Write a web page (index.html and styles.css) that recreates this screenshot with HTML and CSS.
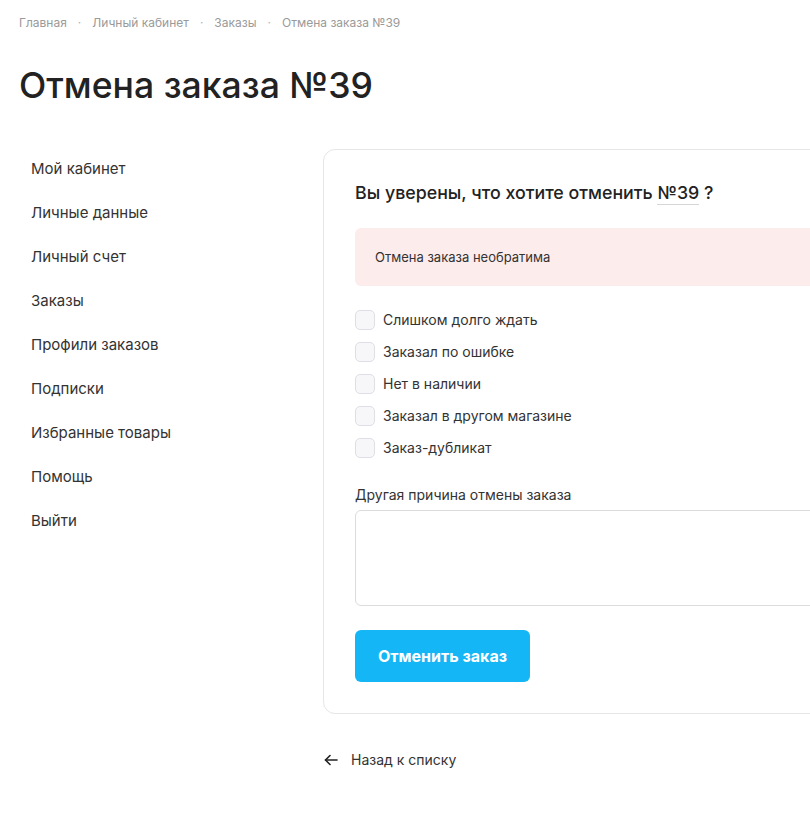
FILE: index.html
```html
<!DOCTYPE html>
<html lang="ru">
<head>
<meta charset="utf-8">
<title>Отмена заказа №39</title>
<link rel="stylesheet" href="styles.css">
</head>
<body>
<div class="page">
  <nav class="breadcrumbs">
    <a href="#">Главная</a><span class="sep">·</span>
    <a href="#">Личный кабинет</a><span class="sep">·</span>
    <a href="#">Заказы</a><span class="sep">·</span>
    <span class="current">Отмена заказа №39</span>
  </nav>
  <h1 class="title">Отмена заказа №39</h1>
  <div class="layout">
    <aside class="sidebar">
      <a class="menu-item" href="#">Мой кабинет</a>
      <a class="menu-item" href="#">Личные данные</a>
      <a class="menu-item" href="#">Личный счет</a>
      <a class="menu-item" href="#">Заказы</a>
      <a class="menu-item" href="#">Профили заказов</a>
      <a class="menu-item" href="#">Подписки</a>
      <a class="menu-item" href="#">Избранные товары</a>
      <a class="menu-item" href="#">Помощь</a>
      <a class="menu-item" href="#">Выйти</a>
    </aside>
    <main class="main">
      <section class="card">
        <h2 class="question">Вы уверены, что хотите отменить <a class="order-link" href="#">№39</a> ?</h2>
        <div class="alert">Отмена заказа необратима</div>
        <div class="reasons">
          <label class="check"><span class="box"></span>Слишком долго ждать</label>
          <label class="check"><span class="box"></span>Заказал по ошибке</label>
          <label class="check"><span class="box"></span>Нет в наличии</label>
          <label class="check"><span class="box"></span>Заказал в другом магазине</label>
          <label class="check"><span class="box"></span>Заказ-дубликат</label>
        </div>
        <div class="field">
          <div class="field-label">Другая причина отмены заказа</div>
          <div class="textarea"></div>
        </div>
        <button class="btn" type="button">Отменить заказ</button>
      </section>
      <a class="back" href="#">
        <svg class="back-icon" width="16" height="16" viewBox="0 0 16 16" fill="none" stroke="#222" stroke-width="1.6" stroke-linecap="round" stroke-linejoin="round"><path d="M14 8H2.5"/><path d="M7 3.5L2.5 8L7 12.5"/></svg>
        <span>Назад к списку</span>
      </a>
    </main>
  </div>
</div>
</body>
</html>
```

FILE: styles.css
```css
html, body {
  margin: 0;
  padding: 0;
  overflow: hidden;
  background: #fff;
}
body {
  font-family: Inter, "Noto Sans", "Liberation Sans", sans-serif;
  color: #333;
}
a { text-decoration: none; color: inherit; }
.page {
  padding: 15px 0 0 19px;
  width: 1100px;
}
.breadcrumbs {
  font-size: 12px;
  color: #9a9a9a;
  line-height: 15px;
  display: flex;
  align-items: center;
}
.breadcrumbs .sep {
  margin: 0 11px;
  color: #b5b5b5;
}
.title {
  margin: 34px 0 0 0;
  font-size: 35.6px;
  font-weight: 500;
  line-height: 44px;
  color: #222;
}
.layout {
  display: flex;
  margin-top: 41px;
}
.sidebar {
  width: 304px;
  flex: none;
  display: flex;
  flex-direction: column;
  padding-top: 10px;
}
.menu-item {
  font-size: 15px;
  line-height: 20px;
  padding: 0 12px;
  margin-bottom: 24px;
  color: #333;
}
.main {
  flex: 1;
}
.card {
  border: 1px solid #e6e6e6;
  border-radius: 12px;
  padding: 31px 32px 31px 31px;
}
.question {
  margin: 0;
  font-size: 17.8px;
  font-weight: 500;
  line-height: 24px;
  color: #222;
}
.order-link {
  border-bottom: 1px solid #d6d6d6;
  padding-bottom: 1px;
}
.alert {
  margin-top: 23px;
  background: #fdecec;
  border-radius: 6px;
  padding: 21px 20px 20px;
  font-size: 13px;
  line-height: 17px;
  color: #333;
}
.reasons {
  margin-top: 24px;
  display: flex;
  flex-direction: column;
  gap: 12px;
}
.check {
  display: flex;
  align-items: center;
  font-size: 14px;
  line-height: 20px;
  color: #333;
}
.box {
  width: 18px;
  height: 18px;
  border: 1px solid #dedee4;
  background: #f7f7fa;
  border-radius: 5px;
  margin-right: 8px;
  flex: none;
}
.field {
  margin-top: 28px;
}
.field-label {
  font-size: 14px;
  line-height: 18px;
  color: #333;
  margin-bottom: 6px;
}
.textarea {
  height: 94px;
  border: 1px solid #dcdcdc;
  border-radius: 6px;
}
.btn {
  margin-top: 24px;
  width: 175px;
  height: 52px;
  border: none;
  border-radius: 6px;
  background: #14b6f6;
  color: #fff;
  font-family: inherit;
  font-size: 16px;
  font-weight: 700;
  cursor: pointer;
}
.back {
  display: flex;
  align-items: center;
  margin-top: 37px;
  font-size: 14px;
  color: #333;
}
.back-icon {
  margin-right: 12px;
}
```
